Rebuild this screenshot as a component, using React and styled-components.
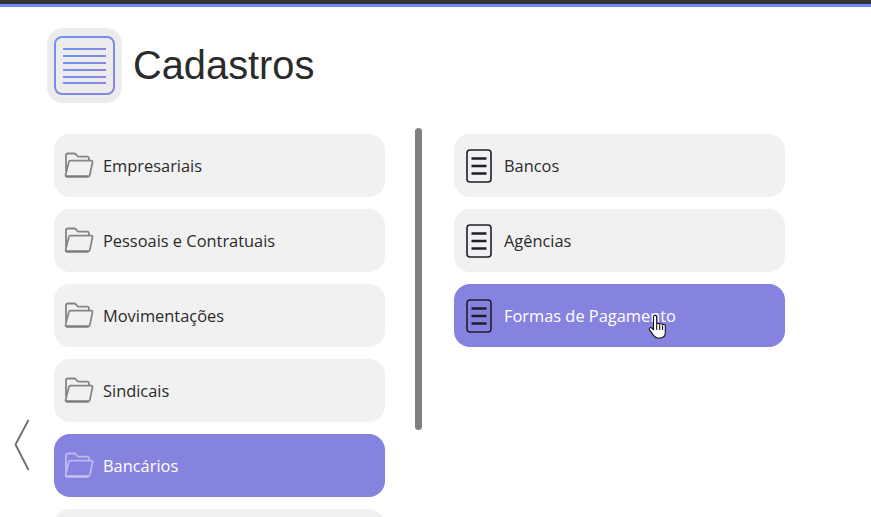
import React from 'react'
import styled, { createGlobalStyle } from 'styled-components';

const GlobalStyle = createGlobalStyle`
    html, body {
        margin: 0;
        padding: 0;
        height: 100%;
        overflow: hidden;
        background: #ffffff;
    }
`;

const FolderIcon = ({ active }) => (
  <FolderSvg viewBox="0 0 30 26" $active={active}>
    <path d="M2 19.5V3.2C2 2 2.7 1.5 3.8 1.5h6.4c.8 0 1.3.3 1.8.9l1.3 1.6c.4.5.9.7 1.600.7h8.200c1.100 0 1.800.7 1.800 1.800v2" />
    <path d="M6.600 8.600h20.600c1 0 1.500.6 1.300 1.500l-2.700 13c-.2.9-.8 1.400-1.700 1.400H3c-1 0-1.600-.6-1.400-1.600l3.200-12.800c.2-1 .9-1.500 1.800-1.500z" />
    <BottomEdge d="M2 24.500h22.500" $active={active} />
  </FolderSvg>
);

const DocIcon = () => (
  <DocSvg viewBox="0 0 26 34">
    <rect x="1" y="1" width="24" height="32" rx="3" />
    <path d="M5.500 9.500h15M5.500 17h15M5.500 24.500h15" />
  </DocSvg>
);

const leftItems = [
  { label: 'Empresariais' },
  { label: 'Pessoais e Contratuais' },
  { label: 'Movimentações' },
  { label: 'Sindicais' },
  { label: 'Bancários', active: true },
  { label: '' },
];

const rightItems = [
  { label: 'Bancos' },
  { label: 'Agências' },
  { label: 'Formas de Pagamento', active: true },
];

const App = () => {
  return (
    <Page>
      <GlobalStyle />
      <TopBar />
      <Header>
        <HeaderIcon>
          <svg width="61" height="59" viewBox="0 0 61 59">
            <defs>
              <linearGradient id="cad" x1="0" y1="0" x2="1" y2="1">
                <stop offset="0" stopColor="#6f94f5" />
                <stop offset="1" stopColor="#8a84df" />
              </linearGradient>
              <linearGradient id="cadLines" x1="0" y1="0" x2="1" y2="0">
                <stop offset="0" stopColor="#6f94f5" />
                <stop offset="1" stopColor="#8a84df" />
              </linearGradient>
            </defs>
            <rect x="1" y="1" width="59" height="57" rx="7" fill="none" stroke="url(#cad)" strokeWidth="2" />
            <path d="M9 12h43v2H9zM9 19h43v2H9zM9 26h43v2H9zM9 33h43v2H9zM9 40h43v2H9zM9 46h43v2H9z" fill="url(#cadLines)" />
          </svg>
        </HeaderIcon>
        <Title>Cadastros</Title>
      </Header>
      <Columns>
        <Column>
          {leftItems.map((item, i) => (
            <Card key={i} $active={item.active}>
              <FolderIcon active={item.active} />
              <CardLabel>{item.label}</CardLabel>
            </Card>
          ))}
        </Column>
        <Scrollbar />
        <Column>
          {rightItems.map((item) => (
            <Card key={item.label} $active={item.active}>
              <DocIcon />
              <CardLabel>{item.label}</CardLabel>
            </Card>
          ))}
        </Column>
      </Columns>
      <BackArrow viewBox="0 0 16 52">
        <path d="M14.500 1L1.500 25.500l13 25.500" />
      </BackArrow>
      <HandCursor viewBox="0 0 20 26">
        <path d="M6 1.800c1-.9 2.600-.3 2.700 1.100v7.300c.2-1 2.800-1.100 3 .2.4-1 2.700-.9 2.900.5.6-.8 2.600-.5 2.700 1v6.400c0 3.200-1.700 5.700-4.900 5.700H10c-2 0-3.200-.8-4.300-2.400L1.500 15.700c-.9-1.400 1-2.900 2.300-1.700l1.700 1.700V2.900c0-.4.200-.8.500-1.100z" />
        <path d="M8.700 10.500v5.500M11.700 11v5M14.600 11.500v4.500" />
      </HandCursor>
    </Page>
  )
}

const Page = styled.div`
    position: relative;
    height: 517px;
    overflow: hidden;
    background-color: #ffffff;
`;

const TopBar = styled.div`
    height: 4px;
    background-color: #36343b;
    border-bottom: 3px solid #6f8cf2;
`;

const Header = styled.header`
    display: flex;
    align-items: center;
    column-gap: 11px;
    padding: 21px 0 0 47px;
`;

const HeaderIcon = styled.div`
    display: flex;
    align-items: center;
    justify-content: center;
    width: 75px;
    height: 75px;
    border-radius: 16px;
    background-color: #ececec;
`;

const Title = styled.h1`
    margin: 0;
    font-family: "Liberation Sans", Arial, sans-serif;
    font-size: 39.8px;
    font-weight: 400;
    color: #2b2b2b;
`;

const Columns = styled.div`
    display: flex;
    align-items: flex-start;
    padding: 25px 0 0 54px;
`;

const Column = styled.div`
    display: flex;
    flex-direction: column;
    row-gap: 12px;
    width: 331px;
    padding-top: 6px;
`;

const Scrollbar = styled.div`
    width: 7px;
    height: 302px;
    margin: 0 32px 0 30px;
    border-radius: 4px;
    background-color: #808080;
`;

const Card = styled.div`
    display: flex;
    align-items: center;
    column-gap: 8px;
    flex-shrink: 0;
    height: 63px;
    padding-left: 10px;
    border-radius: 16px;
    background-color: ${(p) => (p.$active ? '#8683e0' : '#f1f1f1')};
    color: ${(p) => (p.$active ? '#ffffff' : '#2b2b2b')};
`;

const CardLabel = styled.span`
    margin-top: -1px;
    font-family: "Open Sans", "Noto Sans", sans-serif;
    font-size: 16.4px;
`;

const FolderSvg = styled.svg`
    width: 30px;
    height: 26px;
    flex-shrink: 0;
    margin: -1px 1px 0 0;
    fill: none;
    stroke: ${(p) => (p.$active ? '#bcbaf0' : '#858585')};
    stroke-width: 1.8;
    stroke-linejoin: round;
`;

const BottomEdge = styled.path`
    stroke: ${(p) => (p.$active ? '#c6c4f3' : '#7a7a7a')};
    stroke-width: 2;
`;

const DocSvg = styled.svg`
    width: 26px;
    height: 34px;
    flex-shrink: 0;
    margin: 0 4px 0 2px;
    fill: none;
    stroke: #1f1f2b;
    stroke-width: 1.6;

    path {
        stroke-width: 2.4;
    }
`;

const BackArrow = styled.svg`
    position: absolute;
    left: 14px;
    top: 419px;
    width: 16px;
    height: 52px;
    fill: none;
    stroke: #6f6f6f;
    stroke-width: 1.9;
`;

const HandCursor = styled.svg`
    position: absolute;
    left: 648px;
    top: 314px;
    width: 20px;
    height: 26px;
    fill: #ffffff;
    stroke: #111111;
    stroke-width: 1.1;
    stroke-linejoin: round;
`;

export default App
